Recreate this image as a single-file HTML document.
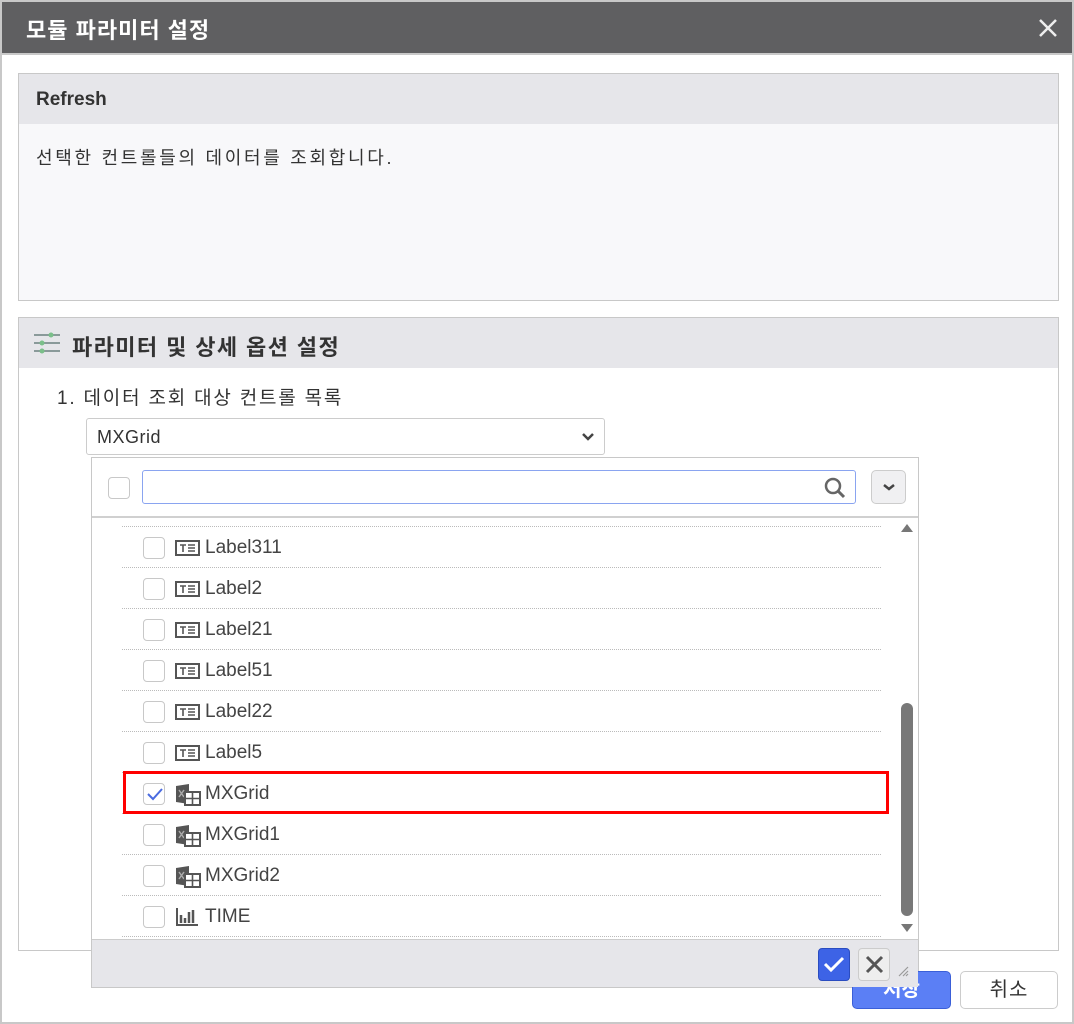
<!DOCTYPE html>
<html><head><meta charset="utf-8"><style>
*{box-sizing:border-box;margin:0;padding:0}
body{width:1074px;height:1024px;background:#fff;font-family:"Liberation Sans","Noto Sans CJK KR",sans-serif;position:relative;overflow:hidden;color:#333}
.a{position:absolute}
.outer{left:0;top:0;width:1074px;height:1024px;border:2px solid #c8c8c8}
.title{left:2px;top:2px;width:1070px;height:53px;background:#5f5f61;border-bottom:2px solid #c8c8c8}
.cb{width:22px;height:22px;border:1.5px solid #c8c8c8;border-radius:4px;background:#fff}
.row{left:122px;width:759px;height:41px;border-top:1px dotted #bbb}
.lbl{left:205px;font-size:19px;color:#444}
</style></head><body>
<div class="a outer"></div>
<div class="a title"></div>
<div class="a" style="left:26px;top:13px;font-size:22px;font-weight:bold;color:#fff;letter-spacing:1px">모듈 파라미터 설정</div>
<svg class="a" style="left:1038px;top:18px" width="20" height="20"><path d="M2 2L18 18M18 2L2 18" stroke="#eee" stroke-width="2.5"/></svg>

<div class="a" style="left:18px;top:73px;width:1041px;height:228px;border:1px solid #c8c8c8;background:#f8f8fa"></div>
<div class="a" style="left:19px;top:74px;width:1039px;height:50px;background:#e6e6ea"></div>
<div class="a" style="left:36px;top:89px;font-size:19px;font-weight:bold;color:#333">Refresh</div>
<div class="a" style="left:36px;top:144px;font-size:18px;color:#333;letter-spacing:2.7px">선택한 컨트롤들의 데이터를 조회합니다.</div>

<div class="a" style="left:18px;top:317px;width:1041px;height:634px;border:1px solid #c8c8c8;background:#fff"></div>
<div class="a" style="left:19px;top:318px;width:1039px;height:50px;background:#e6e6ea"></div>
<svg class="a" style="left:33px;top:332px" width="28" height="22"><g stroke="#8a9a9a" stroke-width="2"><path d="M1 3H27M1 11H27M1 19H27"/></g><g fill="#7bbf8a"><circle cx="18" cy="3" r="2.5"/><circle cx="9" cy="11" r="2.5"/><circle cx="9" cy="19" r="2.5"/></g></svg>
<div class="a" style="left:72px;top:330px;font-size:22px;font-weight:bold;color:#333;letter-spacing:1.4px">파라미터 및 상세 옵션 설정</div>
<div class="a" style="left:57px;top:383px;font-size:19px;color:#333;letter-spacing:1.8px">1. 데이터 조회 대상 컨트롤 목록</div>
<div class="a" style="left:86px;top:418px;width:519px;height:37px;border:1px solid #ccc;border-radius:3px;background:#fff"></div>
<div class="a" style="left:97px;top:427px;font-size:18px;color:#333;letter-spacing:0.5px">MXGrid</div>
<svg class="a" style="left:582px;top:432px" width="12" height="10"><path d="M1 2L6 7L11 2" stroke="#444" stroke-width="2.5" fill="none"/></svg>

<div class="a" style="left:91px;top:457px;width:828px;height:531px;border:1px solid #c8c8c8;background:#fff"></div>
<div class="a cb" style="left:108px;top:477px"></div>
<div class="a" style="left:142px;top:470px;width:714px;height:34px;border:1px solid #8aa4f0;border-radius:3px"></div>
<svg class="a" style="left:823px;top:476px" width="24" height="24"><circle cx="10" cy="10" r="7" stroke="#666" stroke-width="2.5" fill="none"/><path d="M15 15L21 21" stroke="#666" stroke-width="3"/></svg>
<div class="a" style="left:871px;top:470px;width:35px;height:34px;border:1px solid #ccc;border-radius:5px;background:#f0f0f2"></div>
<svg class="a" style="left:883px;top:483px" width="12" height="9"><path d="M1 2L6 6L11 2" stroke="#444" stroke-width="2.5" fill="none"/></svg>
<div class="a" style="left:92px;top:516px;width:826px;height:2px;background:#d0d0d0"></div>

<div class="a" style="left:122px;top:526px;width:759px;height:1px;border-top:1px dotted #bbb"></div>
<div class="a cb" style="left:143px;top:537px"></div><svg class="a" style="left:175px;top:540px" width="25" height="16"><rect x="1" y="1" width="23" height="14" fill="#fff" stroke="#555" stroke-width="2"/><path d="M5 5H11M8 5V12M13 5H20M13 8H20M13 11H20" stroke="#555" stroke-width="1.6"/></svg><div class="a lbl" style="top:537px">Label311</div>
<div class="a row" style="top:567px"></div>
<div class="a cb" style="left:143px;top:578px"></div><svg class="a" style="left:175px;top:581px" width="25" height="16"><rect x="1" y="1" width="23" height="14" fill="#fff" stroke="#555" stroke-width="2"/><path d="M5 5H11M8 5V12M13 5H20M13 8H20M13 11H20" stroke="#555" stroke-width="1.6"/></svg><div class="a lbl" style="top:578px">Label2</div>
<div class="a row" style="top:608px"></div>
<div class="a cb" style="left:143px;top:619px"></div><svg class="a" style="left:175px;top:622px" width="25" height="16"><rect x="1" y="1" width="23" height="14" fill="#fff" stroke="#555" stroke-width="2"/><path d="M5 5H11M8 5V12M13 5H20M13 8H20M13 11H20" stroke="#555" stroke-width="1.6"/></svg><div class="a lbl" style="top:619px">Label21</div>
<div class="a row" style="top:649px"></div>
<div class="a cb" style="left:143px;top:660px"></div><svg class="a" style="left:175px;top:663px" width="25" height="16"><rect x="1" y="1" width="23" height="14" fill="#fff" stroke="#555" stroke-width="2"/><path d="M5 5H11M8 5V12M13 5H20M13 8H20M13 11H20" stroke="#555" stroke-width="1.6"/></svg><div class="a lbl" style="top:660px">Label51</div>
<div class="a row" style="top:690px"></div>
<div class="a cb" style="left:143px;top:701px"></div><svg class="a" style="left:175px;top:704px" width="25" height="16"><rect x="1" y="1" width="23" height="14" fill="#fff" stroke="#555" stroke-width="2"/><path d="M5 5H11M8 5V12M13 5H20M13 8H20M13 11H20" stroke="#555" stroke-width="1.6"/></svg><div class="a lbl" style="top:701px">Label22</div>
<div class="a row" style="top:731px"></div>
<div class="a cb" style="left:143px;top:742px"></div><svg class="a" style="left:175px;top:745px" width="25" height="16"><rect x="1" y="1" width="23" height="14" fill="#fff" stroke="#555" stroke-width="2"/><path d="M5 5H11M8 5V12M13 5H20M13 8H20M13 11H20" stroke="#555" stroke-width="1.6"/></svg><div class="a lbl" style="top:742px">Label5</div>
<div class="a row" style="top:772px"></div>
<div class="a cb" style="left:143px;top:783px"></div><svg class="a" style="left:146px;top:787px" width="18" height="14"><path d="M2 7L7 12L16 2" stroke="#4a6be0" stroke-width="2" fill="none"/></svg>
<svg class="a" style="left:175px;top:783px" width="26" height="24"><path d="M1 3L14 1V21L1 19Z" fill="#555"/><path d="M4 7L9 14M9 7L4 14" stroke="#aaa" stroke-width="1.5"/><rect x="10" y="9" width="15" height="13" fill="#fff" stroke="#555" stroke-width="2"/><path d="M10 15.5H25M17.5 9V22" stroke="#555" stroke-width="1.6"/></svg><div class="a lbl" style="top:783px">MXGrid</div>
<div class="a row" style="top:813px"></div>
<div class="a cb" style="left:143px;top:824px"></div><svg class="a" style="left:175px;top:824px" width="26" height="24"><path d="M1 3L14 1V21L1 19Z" fill="#555"/><path d="M4 7L9 14M9 7L4 14" stroke="#aaa" stroke-width="1.5"/><rect x="10" y="9" width="15" height="13" fill="#fff" stroke="#555" stroke-width="2"/><path d="M10 15.5H25M17.5 9V22" stroke="#555" stroke-width="1.6"/></svg><div class="a lbl" style="top:824px">MXGrid1</div>
<div class="a row" style="top:854px"></div>
<div class="a cb" style="left:143px;top:865px"></div><svg class="a" style="left:175px;top:865px" width="26" height="24"><path d="M1 3L14 1V21L1 19Z" fill="#555"/><path d="M4 7L9 14M9 7L4 14" stroke="#aaa" stroke-width="1.5"/><rect x="10" y="9" width="15" height="13" fill="#fff" stroke="#555" stroke-width="2"/><path d="M10 15.5H25M17.5 9V22" stroke="#555" stroke-width="1.6"/></svg><div class="a lbl" style="top:865px">MXGrid2</div>
<div class="a row" style="top:895px"></div>
<div class="a cb" style="left:143px;top:906px"></div><svg class="a" style="left:175px;top:907px" width="24" height="20"><path d="M2 1V18H23" stroke="#555" stroke-width="2" fill="none"/><path d="M6 8V16M10 11V16M14 5V16M18 3V16" stroke="#555" stroke-width="2.5"/></svg><div class="a lbl" style="top:906px">TIME</div>
<div class="a" style="left:122px;top:936px;width:759px;height:1px;border-top:1px dotted #bbb"></div>

<div class="a" style="left:123px;top:771px;width:766px;height:43px;border:3px solid #f00"></div>

<svg class="a" style="left:900px;top:522px" width="14" height="12"><path d="M1 10L7 2L13 10Z" fill="#777"/></svg>
<div class="a" style="left:901px;top:703px;width:12px;height:213px;background:#787878;border-radius:6px"></div>
<svg class="a" style="left:900px;top:922px" width="14" height="12"><path d="M1 2L7 10L13 2Z" fill="#777"/></svg>

<div class="a" style="left:852px;top:971px;width:99px;height:38px;background:#5b7ff5;border:1px solid #3a5fd8;border-radius:5px;color:#fff;font-size:20px;font-weight:bold;text-align:center;line-height:36px">저장</div>
<div class="a" style="left:960px;top:971px;width:98px;height:38px;background:#fff;border:1px solid #ccc;border-radius:5px;color:#333;font-size:20px;text-align:center;line-height:36px;letter-spacing:1px">취소</div>

<div class="a" style="left:92px;top:939px;width:826px;height:48px;background:#e6e6ea;border-top:1px solid #ccc"></div>
<div class="a" style="left:818px;top:948px;width:32px;height:33px;background:#3d63e6;border:1px solid #2a4cc0;border-radius:4px"></div>
<svg class="a" style="left:823px;top:955px" width="22" height="18"><path d="M2 9L8 15L20 3" stroke="#fff" stroke-width="3" fill="none"/></svg>
<div class="a" style="left:858px;top:948px;width:32px;height:33px;background:#eee;border:1px solid #ccc;border-radius:4px"></div>
<svg class="a" style="left:865px;top:955px" width="19" height="19"><path d="M2 2L17 17M17 2L2 17" stroke="#555" stroke-width="3"/></svg>
<svg class="a" style="left:897px;top:965px" width="12" height="12"><path d="M11 2L2 11M11 6L6 11M11 9L9 11" stroke="#999" stroke-width="1.2"/></svg>
</body></html>
